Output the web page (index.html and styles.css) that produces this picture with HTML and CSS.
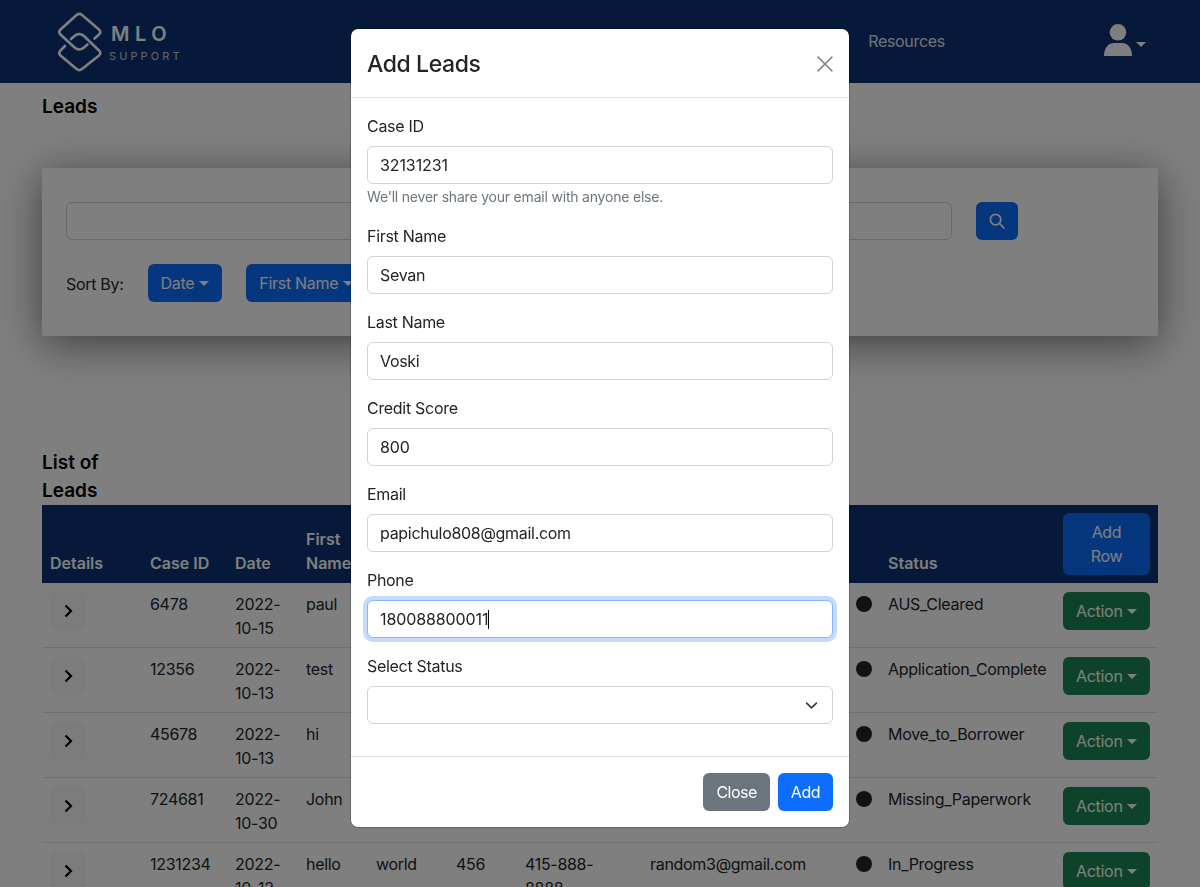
FILE: index.html
```html
<!DOCTYPE html>
<html lang="en">
<head>
    <meta charset="UTF-8">
    <meta name="viewport" content="width=device-width, initial-scale=1.0">
    <title>Leads</title>
    <link rel="stylesheet" href="styles.css">
</head>
<body>
    <nav class="navbar">
        <a class="brand" href="#">
            <svg class="brand-mark" width="46" height="60" viewBox="0 0 46 60" fill="none" stroke="currentColor" stroke-width="2.6" stroke-linecap="round">
                <path d="M37.5 26.5 L42 22.5 Q44.7 20 42 17.5 L25 3 Q22.3 .8 19.6 3 L3.5 17.5 Q1 20 3.5 22.5 L17.5 35.5 Q22.3 39.5 27 35.5 L30.5 32.5"/>
                <path d="M8 34 L3.5 38.5 Q1 41 3.5 43.5 L19.6 57 Q22.3 59.2 25 57 L42 43.5 Q44.7 41 42 38.5 L27 24 Q22.3 20 17.5 24 L14 27"/>
            </svg>
            <span class="brand-text">
                <span class="brand-top">MLO</span>
                <span class="brand-sub">SUPPORT</span>
            </span>
        </a>
        <a class="nav-link" href="#">Resources</a>
        <a class="user-menu" href="#">
            <svg width="28" height="32" viewBox="0 0 28 32" fill="currentColor">
                <circle cx="14" cy="8.3" r="8.3"/>
                <path d="M0 32 C0 23 5 19 10 19 H18 C23 19 28 23 28 32 Z"/>
            </svg>
            <span class="caret"></span>
        </a>
    </nav>

    <main class="content">
        <h2 class="page-title">Leads</h2>

        <section class="search-card">
            <div class="search-row">
                <input class="search-input" type="text">
                <button class="btn btn-blue btn-search" aria-label="Search">
                    <svg width="16" height="16" viewBox="0 0 16 16" fill="none" stroke="currentColor" stroke-width="1.7" stroke-linecap="round">
                        <circle cx="6.6" cy="6.6" r="5.2"/>
                        <path d="M10.6 10.6 L15 15"/>
                    </svg>
                </button>
            </div>
            <div class="sort-row">
                <span class="sort-label">Sort By:</span>
                <button class="btn btn-blue">Date<span class="caret"></span></button>
                <button class="btn btn-blue">First Name<span class="caret"></span></button>
            </div>
        </section>

        <h2 class="list-title">List of Leads</h2>

        <table class="leads-table">
            <colgroup>
                <col class="col-details"><col class="col-case"><col class="col-date"><col class="col-first">
                <col class="col-last"><col class="col-credit"><col class="col-phone"><col class="col-email">
                <col class="col-dot"><col class="col-status"><col class="col-action">
            </colgroup>
            <thead>
                <tr>
                    <th>Details</th>
                    <th>Case ID</th>
                    <th>Date</th>
                    <th>First Name</th>
                    <th>Last Name</th>
                    <th>Credit Score</th>
                    <th>Phone</th>
                    <th>Email</th>
                    <th></th>
                    <th>Status</th>
                    <th><button class="btn btn-blue btn-add-row">Add Row</button></th>
                </tr>
            </thead>
            <tbody>
                <tr>
                    <td><button class="btn-expand" aria-label="Expand"><svg width="16" height="16" viewBox="0 0 16 16"><path d="M5.5 2.5 L11 8 L5.5 13.5" fill="none" stroke="currentColor" stroke-width="2.2"/></svg></button></td>
                    <td>6478</td><td>2022-10-15</td><td>paul</td><td></td><td></td><td></td><td></td>
                    <td><span class="dot"></span></td><td>AUS_Cleared</td>
                    <td><button class="btn btn-green">Action<span class="caret"></span></button></td>
                </tr>
                <tr>
                    <td><button class="btn-expand" aria-label="Expand"><svg width="16" height="16" viewBox="0 0 16 16"><path d="M5.5 2.5 L11 8 L5.5 13.5" fill="none" stroke="currentColor" stroke-width="2.2"/></svg></button></td>
                    <td>12356</td><td>2022-10-13</td><td>test</td><td></td><td></td><td></td><td></td>
                    <td><span class="dot"></span></td><td>Application_Complete</td>
                    <td><button class="btn btn-green">Action<span class="caret"></span></button></td>
                </tr>
                <tr>
                    <td><button class="btn-expand" aria-label="Expand"><svg width="16" height="16" viewBox="0 0 16 16"><path d="M5.5 2.5 L11 8 L5.5 13.5" fill="none" stroke="currentColor" stroke-width="2.2"/></svg></button></td>
                    <td>45678</td><td>2022-10-13</td><td>hi</td><td></td><td></td><td></td><td></td>
                    <td><span class="dot"></span></td><td>Move_to_Borrower</td>
                    <td><button class="btn btn-green">Action<span class="caret"></span></button></td>
                </tr>
                <tr>
                    <td><button class="btn-expand" aria-label="Expand"><svg width="16" height="16" viewBox="0 0 16 16"><path d="M5.5 2.5 L11 8 L5.5 13.5" fill="none" stroke="currentColor" stroke-width="2.2"/></svg></button></td>
                    <td>724681</td><td>2022-10-30</td><td>John</td><td></td><td></td><td></td><td></td>
                    <td><span class="dot"></span></td><td>Missing_Paperwork</td>
                    <td><button class="btn btn-green">Action<span class="caret"></span></button></td>
                </tr>
                <tr>
                    <td><button class="btn-expand" aria-label="Expand"><svg width="16" height="16" viewBox="0 0 16 16"><path d="M5.5 2.5 L11 8 L5.5 13.5" fill="none" stroke="currentColor" stroke-width="2.2"/></svg></button></td>
                    <td>1231234</td><td>2022-10-12</td><td>hello</td><td>world</td><td>456</td><td class="cell-phone">415-888-8888</td><td>random3@gmail.com</td>
                    <td><span class="dot"></span></td><td>In_Progress</td>
                    <td><button class="btn btn-green">Action<span class="caret"></span></button></td>
                </tr>
            </tbody>
        </table>
    </main>

    <div class="backdrop"></div>

    <div class="modal">
        <div class="modal-header">
            <h3 class="modal-title">Add Leads</h3>
            <button class="btn-close" aria-label="Close">
                <svg width="16" height="16" viewBox="0 0 16 16"><path d="M.6 .6 L15.4 15.4 M15.4 .6 L.6 15.4" fill="none" stroke="currentColor" stroke-width="1.7"/></svg>
            </button>
        </div>
        <form class="modal-body">
            <div class="field">
                <label>Case ID</label>
                <input class="form-control numeric" type="text" value="32131231">
                <div class="form-text">We'll never share your email with anyone else.</div>
            </div>
            <div class="field">
                <label>First Name</label>
                <input class="form-control" type="text" value="Sevan">
            </div>
            <div class="field">
                <label>Last Name</label>
                <input class="form-control" type="text" value="Voski">
            </div>
            <div class="field">
                <label>Credit Score</label>
                <input class="form-control numeric" type="text" value="800">
            </div>
            <div class="field">
                <label>Email</label>
                <input class="form-control" type="text" value="papichulo808@gmail.com">
            </div>
            <div class="field">
                <label>Phone</label>
                <div class="form-control numeric is-focused">180088800011<span class="text-cursor"></span></div>
            </div>
            <div class="field">
                <label>Select Status</label>
                <div class="form-control form-select">
                    <svg width="13" height="13" viewBox="0 0 16 16"><path d="M2 5 L8 11 L14 5" fill="none" stroke="#343a40" stroke-width="2" stroke-linecap="round" stroke-linejoin="round"/></svg>
                </div>
            </div>
        </form>
        <div class="modal-footer">
            <button class="btn btn-gray">Close</button>
            <button class="btn btn-blue">Add</button>
        </div>
    </div>
</body>
</html>
```

FILE: styles.css
```css
html, body {
    height: 887px;
    overflow: hidden;
}
body {
    margin: 0;
    font-family: Inter, "Liberation Sans", sans-serif;
    font-size: 16px;
    line-height: 24px;
    letter-spacing: -.3px;
    color: #212529;
    background-color: #fff;
}
a {
    text-decoration: none;
}

/* navbar */
.navbar {
    display: flex;
    align-items: center;
    height: 83px;
    background-color: #0c3375;
    color: #fff;
    padding: 0 54px 0 57px;
}
.brand {
    display: flex;
    align-items: center;
    gap: 6px;
    color: #fff;
}
.brand-mark {
    margin-top: 1px;
}
.brand-text {
    display: flex;
    flex-direction: column;
    padding-top: 3px;
}
.brand-top {
    font-size: 20px;
    line-height: 24px;
    font-weight: 600;
    letter-spacing: 5.5px;
    margin-left: 2px;
}
.brand-sub {
    margin-top: 2px;
    font-size: 11px;
    line-height: 16px;
    letter-spacing: 3.1px;
    opacity: .75;
}
.nav-link {
    margin-left: auto;
    margin-bottom: 2px;
    color: rgba(255, 255, 255, .9);
}
.user-menu {
    display: flex;
    align-items: center;
    margin-left: 159px;
    margin-bottom: 4px;
    color: #fff;
}
.user-menu .caret {
    margin-left: 4px;
    margin-top: 10px;
}
.caret {
    display: inline-block;
    margin-left: 4px;
    vertical-align: 3px;
    border-top: 5px solid;
    border-left: 5px solid transparent;
    border-right: 5px solid transparent;
}

/* page */
.content {
    padding: 0 42px;
}
.page-title, .list-title {
    margin: 0;
    font-size: 19px;
    font-weight: 600;
    line-height: 28px;
    letter-spacing: 0;
    color: #000;
}
.page-title {
    padding-top: 10px;
}
.search-card {
    margin-top: 47px;
    padding: 34px 24px;
    background-color: #fff;
    box-shadow: 0 8px 40px rgba(0, 0, 0, .5);
}
.search-row {
    display: flex;
    gap: 24px;
    padding-right: 116px;
}
.search-input {
    flex: 1;
    height: 38px;
    box-sizing: border-box;
    border: 1px solid #ced4da;
    border-radius: 6px;
}
.sort-row {
    display: flex;
    align-items: center;
    gap: 24px;
    margin-top: 24px;
}
.sort-row .caret {
    margin-left: 5px;
}
.sort-label {
    padding-top: 2px;
}
.list-title {
    width: 70px;
    margin-top: 113px;
}

/* buttons */
.btn {
    font: inherit;
    font-weight: 400;
    letter-spacing: -.3px;
    white-space: nowrap;
    padding: 6px 12px;
    border: 1px solid transparent;
    border-radius: 6px;
    color: #fff;
}
.btn-blue {
    background-color: #0d6efd;
}
.btn-green {
    background-color: #198754;
}
.btn-gray {
    background-color: #6c757d;
}
.btn-search {
    display: flex;
    align-items: center;
    justify-content: center;
    width: 42px;
    height: 38px;
    padding: 0;
}
.btn-add-row {
    width: 87px;
    white-space: normal;
}
.btn-expand {
    display: flex;
    align-items: center;
    justify-content: center;
    width: 36px;
    height: 38px;
    padding: 0;
    border: none;
    border-radius: 6px;
    background-color: #f8f9fa;
    color: #000;
}

/* table */
.leads-table {
    width: 1116px;
    table-layout: fixed;
    border-collapse: collapse;
}
.col-details { width: 100px; }
.col-case { width: 85px; }
.col-date { width: 71px; }
.col-first { width: 70px; }
.col-last { width: 80px; }
.col-credit { width: 69px; }
.col-phone { width: 125px; }
.col-email { width: 206px; }
.col-dot { width: 32px; }
.col-status { width: 175px; }
.col-action { width: 103px; }
.leads-table th {
    padding: 8px;
    text-align: left;
    vertical-align: bottom;
    font-weight: 600;
    letter-spacing: 0;
    color: #fff;
    background-color: #0c3375;
}
.leads-table td {
    padding: 9px 8px 7px;
    vertical-align: top;
    border-bottom: 1px solid #dee2e6;
    overflow-wrap: break-word;
}
.leads-table .cell-phone {
    padding-right: 24px;
}
.dot {
    display: block;
    width: 16px;
    height: 16px;
    margin-top: 4px;
    border-radius: 50%;
    background-color: #212529;
}

/* modal */
.backdrop {
    position: fixed;
    inset: 0;
    background-color: rgba(0, 0, 0, .5);
}
.modal {
    position: fixed;
    top: 28px;
    left: 350px;
    width: 500px;
    box-sizing: border-box;
    background-color: #fff;
    background-clip: padding-box;
    border: 1px solid rgba(0, 0, 0, .2);
    border-radius: 8px;
}
.modal-header {
    display: flex;
    align-items: center;
    justify-content: space-between;
    height: 69px;
    box-sizing: border-box;
    padding: 2px 16px 0;
    border-bottom: 1px solid #dee2e6;
}
.modal-title {
    margin: 0;
    font-size: 23px;
    font-weight: 500;
    line-height: 35px;
    letter-spacing: -.4px;
}
.btn-close {
    display: flex;
    padding: 0;
    border: none;
    background: none;
    color: #8a8a8a;
}
.modal-body {
    padding: 16px;
}
.field {
    margin-bottom: 16px;
}
.field label {
    display: block;
    margin-bottom: 8px;
}
.form-control {
    display: block;
    width: 100%;
    height: 38px;
    box-sizing: border-box;
    padding: 6px 12px;
    font: inherit;
    letter-spacing: -.3px;
    color: #212529;
    background-color: #fff;
    border: 1px solid #ced4da;
    border-radius: 6px;
}
.numeric {
    letter-spacing: -.1px;
}
.is-focused {
    border-color: #86b7fe;
    box-shadow: 0 0 0 4px rgba(13, 110, 253, .25);
}
.text-cursor {
    display: inline-block;
    width: 1px;
    height: 19px;
    vertical-align: -4px;
    background-color: #000;
}
.form-select {
    display: flex;
    align-items: center;
    justify-content: flex-end;
    padding-right: 14px;
}
.form-text {
    margin-top: 3px;
    padding-bottom: 1px;
    font-size: 14px;
    line-height: 20px;
    letter-spacing: -.2px;
    color: #6c757d;
}
.modal-footer {
    display: flex;
    justify-content: flex-end;
    gap: 8px;
    padding: 16px;
    border-top: 1px solid #dee2e6;
}
.modal-footer .btn {
    letter-spacing: -.5px;
}
```
